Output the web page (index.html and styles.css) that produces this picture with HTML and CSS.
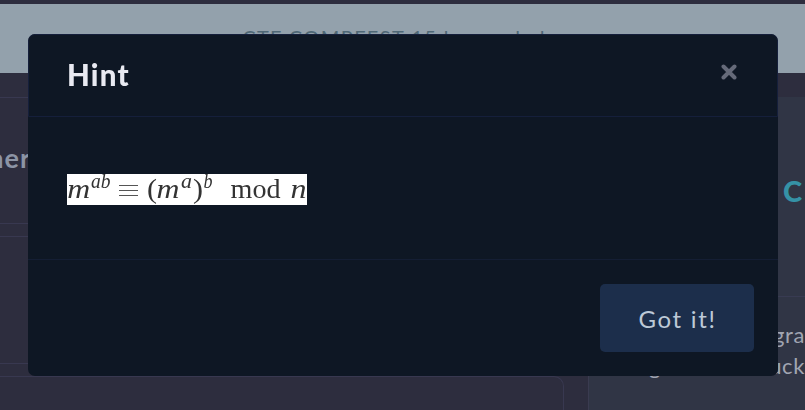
FILE: index.html
```
<!DOCTYPE html>
<html lang="en">
<head>
<meta charset="utf-8">
<title>Hint</title>
<link rel="stylesheet" href="styles.css">
</head>
<body>
<div class="page">
  <header class="banner"><span>CTF COMPFEST 15 has ended</span></header>
  <main class="content">
    <div class="cards">
      <section class="card heading-card"><h2>ner</h2></section>
      <section class="card"></section>
      <section class="card"></section>
    </div>
    <aside class="panel">
      <div class="panel-head">C</div>
      <div class="panel-body"><p class="line-one">gra</p><p class="line-two"><span>g</span><span>uck</span></p></div>
    </aside>
  </main>
</div>
<div class="modal" role="dialog" aria-label="Hint">
  <div class="modal-header">
    <h1>Hint</h1>
    <svg class="close" viewBox="0 0 16 16" role="img" aria-label="Close"><path d="M2.5 2.5 13.5 13.5M13.5 2.5 2.5 13.5"/></svg>
  </div>
  <div class="modal-body">
    <svg class="formula" viewBox="0 0 240 31">
      <g class="italic">
        <text x="0.3" y="23.5" textLength="23" lengthAdjust="spacingAndGlyphs">m</text>
        <text class="sup" x="24" y="14" textLength="19.5" lengthAdjust="spacingAndGlyphs">ab</text>
        <text x="89.5" y="23.5" textLength="23" lengthAdjust="spacingAndGlyphs">m</text>
        <text class="sup" x="114" y="14" textLength="11" lengthAdjust="spacingAndGlyphs">a</text>
        <text class="sup" x="136.5" y="14" textLength="9" lengthAdjust="spacingAndGlyphs">b</text>
        <text x="223.5" y="23.5" textLength="16" lengthAdjust="spacingAndGlyphs">n</text>
      </g>
      <path class="equiv" d="M52 11.5h19M52 16.5h19M52 21.5h19"/>
      <text x="80" y="23.5" textLength="10" lengthAdjust="spacingAndGlyphs">(</text>
      <text x="126" y="23.5" textLength="10" lengthAdjust="spacingAndGlyphs">)</text>
      <text x="163.5" y="23.5" textLength="50" lengthAdjust="spacingAndGlyphs">mod</text>
    </svg>
  </div>
  <div class="modal-footer"><button type="button">Got it!</button></div>
</div>
</body>
</html>
```
FILE: styles.css
```
* { box-sizing: border-box; }
body { margin: 0; background: #2d2d3e; font-family: Lato, "Open Sans", sans-serif; }
h1, h2, p { margin: 0; }
.page { height: 410px; padding-top: 4px; overflow: hidden; }
.banner {
  height: 69px; background: #93a1ac; color: #4f6876;
  display: flex; justify-content: center; padding: 21px 17px 0 0;
  font-size: 20px; line-height: 24px; letter-spacing: 1.4px; white-space: nowrap;
}
.content { display: flex; gap: 24px; padding-top: 24px; }
.cards { flex: none; width: 564px; display: flex; flex-direction: column; gap: 12px; }
.card { height: 128px; border: solid #383850; border-width: 1px 1px 1px 0; border-radius: 0 10px 10px 0; }
.heading-card { height: 127px; }
.card h2 {
  width: 31px; padding-top: 44px; display: flex; justify-content: flex-end;
  font-size: 27px; line-height: 32px; font-weight: 700; letter-spacing: 1px; color: #8c94a5;
}
.panel { flex: 1; min-width: 0; height: 313px; background: #303545; border-left: 1px solid #3a3b50; }
.panel-head {
  height: 200px; padding: 74px 0 0 194px; border-bottom: 1px solid #383b52;
  font-size: 29px; line-height: 40px; font-weight: 900; color: #3592a6;
}
.panel-body { color: #a0a5b2; font-size: 22px; line-height: 31px; letter-spacing: .6px; padding-top: 22px; white-space: nowrap; }
.line-one { padding-left: 184px; }
.line-two { display: flex; padding-left: 60px; }
.line-two span:first-child { width: 125px; }
.modal {
  position: fixed; left: 28px; top: 34px; width: 750px; height: 342px;
  background: #0e1724; border-radius: 7px; overflow: hidden;
  display: flex; flex-direction: column;
}
.modal-header {
  height: 83px; border: 1px solid #151f3b; border-radius: 7px 7px 0 0;
  display: flex; justify-content: space-between; padding: 22px 40px 0 38px;
}
.modal-header h1 { font-size: 29.5px; line-height: 36px; font-weight: 900; letter-spacing: 1.2px; color: #e9eaf2; }
.close { width: 16px; height: 16px; margin-top: 7px; fill: none; stroke: #656a79; stroke-width: 4; stroke-linecap: round; }
.modal-body { height: 143px; padding: 57px 39px; border-bottom: 1px solid #141e34; }
.formula { display: block; width: 240px; height: 31px; background: #fff; font: 28px "Liberation Serif", serif; fill: #333; }
.italic { font-style: italic; }
.sup { font-size: 20px; }
.equiv { stroke: #555; stroke-width: 1.2; fill: none; }
.modal-footer { flex: 1; display: flex; justify-content: flex-end; padding: 24px 24px 0 0; }
button {
  width: 154px; height: 68px; padding: 0 0 0 1px; border: 0; border-radius: 5px;
  background: #1c2e4b; color: #bdc9d7; font: 24px Lato, sans-serif; letter-spacing: 1.7px;
}
```
